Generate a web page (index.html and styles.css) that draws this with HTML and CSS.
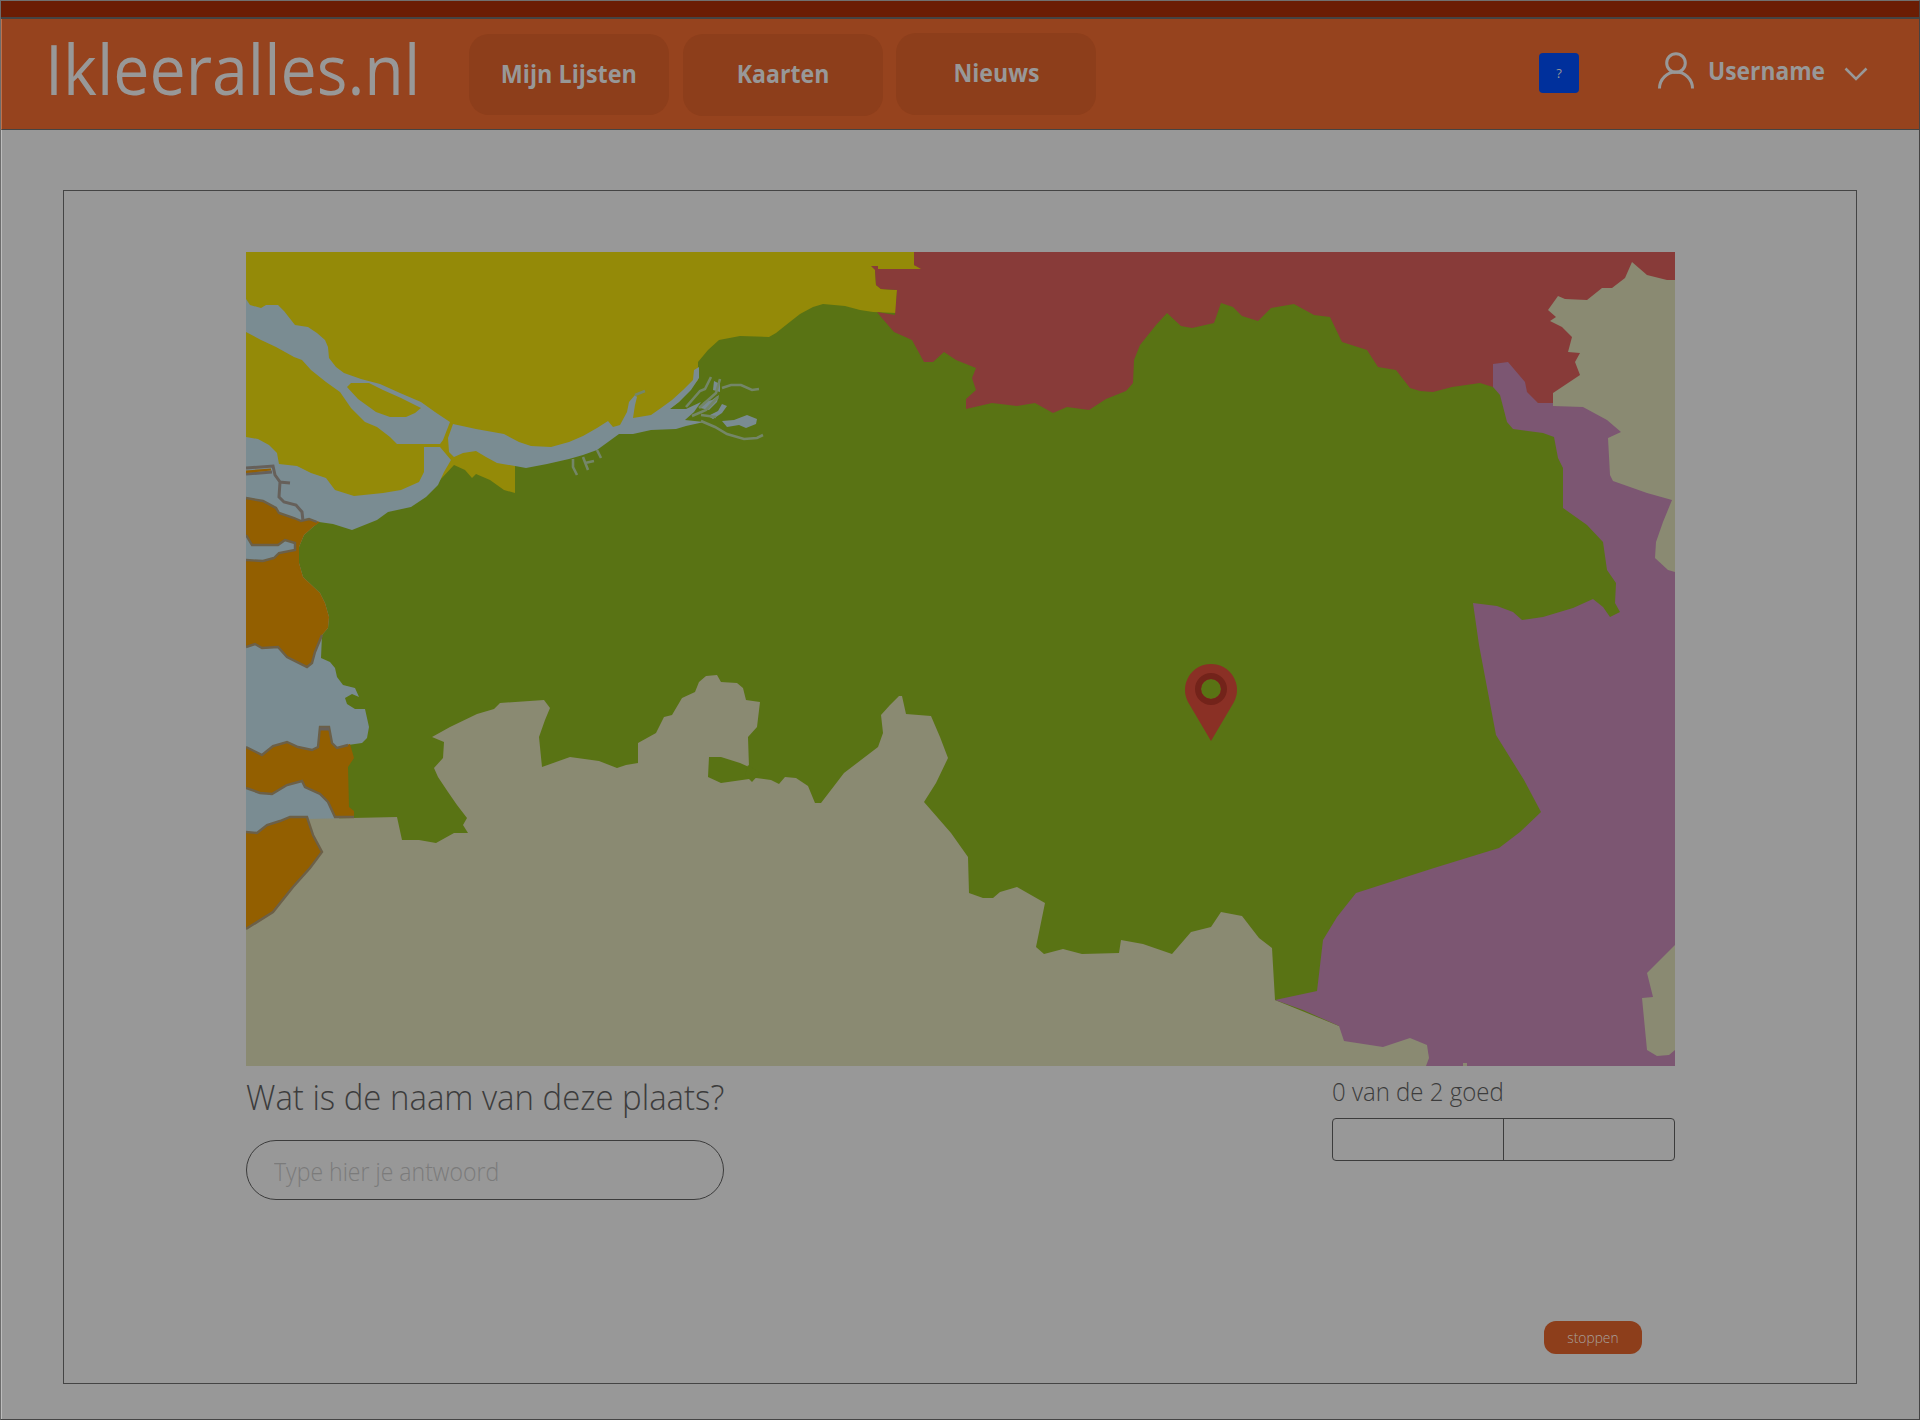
FILE: index.html
```html
<!DOCTYPE html>
<html lang="nl">
<head>
<meta charset="utf-8">
<title>Ikleeralles.nl</title>
<link rel="stylesheet" href="styles.css">
</head>
<body>
<div class="page">
  <div class="topbar"></div>
  <header class="header">
    <div class="logo"><span class="fit fit-logo">Ikleeralles.nl</span></div>
    <nav class="nav">
      <a class="pill"><span class="fit fit-lists">Mijn Lijsten</span></a>
      <a class="pill pill-maps"><span class="fit fit-maps">Kaarten</span></a>
      <a class="pill pill-news"><span class="fit fit-news">Nieuws</span></a>
    </nav>
    <button class="help">?</button>
    <div class="user">
      <svg class="user-icon" width="38" height="38" viewBox="0 0 38 38"><circle cx="19" cy="12" r="9.3"/><path d="M2.5 37.5a16.5 16.5 0 0 1 33 0"/></svg>
      <span class="username"><span class="fit fit-user">Username</span></span>
      <svg class="chevron" width="24" height="14" viewBox="0 0 24 14"><path d="M1.5 1.5L12 12L22.5 1.5"/></svg>
    </div>
  </header>
  <main class="card">
    <svg class="map" width="1429" height="814" viewBox="246 252 1429 814">
      <rect class="green" x="246" y="252" width="1429" height="814"/>
      <path class="yellow" d="M246 252H914V265L921 267V269H875L876 285L881 289L897 290L896 313L873 312L860 310L845 306L823 304L813 307L800 314L786 325L776 333L769 337L740 336L719 340L708 350L698 362V380L679 402L661 415L619 432L544 458L515 463V493L504 490L490 480L476 474L472 478L465 470L454 465L440 480L410 500L350 515L246 480Z"/>
      <path class="red" d="M914 252H1675V300L1600 385L1553 403H1538L1493 387L1480 383L1452 387L1433 392L1420 391L1410 388L1396 370L1378 367L1367 350L1342 342L1330 317L1314 315L1294 304L1271 308L1258 321L1242 316L1233 307L1221 303L1214 323L1192 328L1181 326L1167 313L1156 325L1140 345L1134 360L1133 383L1126 391L1106 399L1089 410L1067 407L1053 413L1035 403L1017 406L992 403L966 409V399L976 390L972 378L976 368L956 360L944 352L933 362H924L912 340L894 332L881 317L877 312L895 315L897 290L881 289L876 285L875 270L871 266H878V269H921L914 265Z"/>
      <path class="water" d="M246 299L250 305L261 308L266 305H278L284 311L295 325L308 327L317 333L325 340L328 347L329 358L336 367L344 373L361 379L380 384L400 393L421 402L435 412L450 422L443 440L440 444H397L390 437L377 427L365 422L351 408L340 392L326 382L311 370L302 360L294 357L276 347L261 340L246 332Z"/>
      <path class="yellow" d="M347 387L351 383H369L383 390L401 398L421 408L415 413L406 417H390L376 412L358 399Z"/>
      <path class="water" d="M453 424L476 429L504 434L519 442L531 446L551 447L569 442L583 436L597 428L608 421L613 427L620 425L627 412L629 402L635 395L637 397L635 405L633 418L651 415L661 408L672 400L683 390L693 380L694 370L699 367V378L691 390L679 402L670 409H686L701 402L694 412L685 420L704 422L686 426L676 429L651 430L633 434H619L608 442L597 450L583 455L569 459L547 464L526 468L515 466L497 463L486 457L476 451L463 453L454 457L449 452L448 438Z"/>
      <path class="water" d="M714 381L720 384V392L713 390ZM704 402L712 400L719 395L717 402L709 410L700 408ZM708 416L718 411L722 404L727 406L722 413L713 419ZM722 421L734 420L747 415L757 419L756 424L746 428L739 425L727 427Z"/>
      <path class="creek" d="M686 407L700 391L705 389L711 377M699 408L716 393L720 379M692 416L706 410L718 397M722 388L731 385L741 385L752 390L759 389M701 421L715 427L727 434L744 439L757 438L763 435M701 415L716 417M635 395L645 391M573 459V467L577 475M583 457L588 470M585 463L594 461M597 450L601 458"/>
      <path class="water" d="M246 437L258 439L269 445L277 453L279 464L297 466L311 473L326 478L335 490L354 496L383 493L401 490L419 482L424 472V447H440L451 460L444 472L438 485L426 497L411 507L388 512L377 520L352 530L333 524L319 522L313 527L304 535L299 547V563L303 577L320 593L325 603L329 617L328 628L322 635L321 658L330 662L335 668L337 677L343 685L355 688L359 697L352 694L345 698L347 704L355 709H365L369 727L367 738L362 743L348 745L340 765V817L322 852L246 860Z"/>
      <path class="beige" d="M246 840L307 819L397 817L402 840H419L436 843L454 833H468L463 825L467 818L457 805L448 792L438 777L434 768L443 758L444 742L432 737L450 727L477 714L494 709L500 703L544 700L550 708L545 720L539 737L542 767L570 757L599 761L617 768L626 765L638 763V743L656 733L664 717L672 715L682 698L695 692L699 682L706 676L717 675L721 682L737 683L743 688L746 700L760 702L757 727L748 737L749 767L740 763L721 757H709L708 777L721 783L756 778L771 780L779 784L785 777L796 778L808 786L815 803H821L844 773L878 747L883 733L881 715L890 705L899 696H902L906 714L931 716L940 737L948 758L936 783L924 802L951 833L968 857L969 893L983 898H993L1000 892L1017 887L1045 903L1036 947L1044 954L1063 949L1082 954L1119 953L1121 940L1143 944L1172 954L1191 932L1211 927L1221 912L1242 916L1259 938L1272 948L1275 1000L1339 1026L1427 1030L1430 1066H246Z"/>
      <path class="green" d="M748 765L760 773L752 782L745 775Z"/>
      <path class="purple" d="M1275 1000L1317 991L1323 940L1337 917L1356 893L1434 868L1499 848L1520 832L1541 812L1524 780L1496 735L1479 645L1473 603L1497 606L1513 612L1522 620L1543 617L1573 608L1593 599L1603 607L1610 617L1620 612L1615 603L1616 583L1607 570L1603 542L1587 525L1563 508V468L1558 458L1554 437L1543 433L1513 429L1507 422L1500 395L1493 387V364L1508 362L1525 382L1527 392L1538 403H1675V1066H1426L1429 1058L1427 1045L1410 1038L1383 1047L1344 1041L1339 1026L1303 1010Z"/>
      <path class="beige" d="M1553 406V393L1580 375L1575 362L1580 353L1568 352L1572 337L1562 327L1550 321L1556 317L1548 310L1558 296L1565 299L1587 300L1602 288H1612L1625 278L1632 262L1647 275L1667 280H1675V572L1668 570L1655 558L1656 542L1663 522L1672 500L1647 493L1613 481L1610 475L1608 438L1621 432L1607 420L1583 407ZM1675 945L1647 973L1653 997L1642 998L1647 1050L1657 1056L1669 1055L1675 1050ZM1463 1063H1467V1066H1463Z"/>
      <path class="orange" d="M246 498L263 501L276 508L279 513L294 518L301 521L309 519L320 522L313 527L304 535L299 547V563L303 577L320 593L325 603L329 617L328 628L322 635L315 652L312 663L307 667L287 657L278 647L262 648L255 644L246 647Z"/>
      <path class="water" d="M246 535L252 545H278L285 540L295 543V550L279 553L274 558L263 561L246 560Z"/>
      <path class="orange" d="M246 747L262 755L273 746L287 742L298 747L312 750L318 747L320 727H329L332 743L337 748L350 744L354 758L348 767L349 807L354 811V817H335L328 802L320 794L305 787L302 781L287 785L272 794L260 793L246 788ZM246 832L257 833L267 825L280 821L290 817H307L313 835L322 852L310 868L293 887L273 912L246 929Z"/>
      <path class="coast" d="M246 498L263 501L276 508L279 513L294 518L301 521L309 519L317 522M246 535L252 545H278L285 540L295 543V550L279 553L274 558L263 561L246 560M246 647L255 644L262 648L278 647L287 657L307 667L312 663L315 652L322 635M246 747L262 755L273 746L287 742L298 747L312 750L318 747L320 727H329L332 743L337 748L348 745M246 788L260 793L272 794L287 785L302 781L305 787L320 794L328 802L335 817H354M246 832L257 833L267 825L280 821L290 817H307L313 835L322 852L310 868L293 887L273 912L246 929"/>
      <path class="dike" d="M246 468L273 466L275 475L280 482L279 497L284 502L296 505L302 512L303 521M279 482L290 483M246 474L272 472M320 729H329"/>
      <path class="orange" d="M246 470.500L271 468.500V470.500L246 473Z"/>
      <path class="pin" fill-rule="evenodd" d="M1211 741L1188 702A26 26 0 1 1 1234 702ZM1211 679a10 10 0 1 0 0 20a10 10 0 1 0 0-20Z"/>
      <circle class="pin-ring" cx="1211" cy="689" r="13"/>
    </svg>
    <section class="quiz">
      <div class="question">
        <h1><span class="fit fit-question">Wat is de naam van deze plaats?</span></h1>
        <div class="answer"><span class="fit fit-answer">Type hier je antwoord</span></div>
      </div>
      <div class="score">
        <p><span class="fit fit-score">0 van de 2 goed</span></p>
        <div class="steps"><i></i><i></i></div>
      </div>
    </section>
    <button class="stop"><span class="fit fit-stop">stoppen</span></button>
  </main>
</div>
</body>
</html>
```
FILE: styles.css
```css
* { box-sizing: border-box; }

body {
  margin: 0;
  font-family: "Open Sans", "Noto Sans", sans-serif;
  background: #989898;
  color: #3c3c3c;
}

.page {
  height: 1420px;
  border: 1px solid #444;
  border-top-color: #707070;
  border-left-color: #6c6c6c;
  box-shadow: inset 1px 0 #bcbcbc;
}

.topbar {
  height: 18px;
  background: #6b1d04;
  border-bottom: 2px solid #444;
}

.header {
  height: 111px;
  display: flex;
  align-items: flex-start;
  background: #96431e;
  border-bottom: 1px solid #444;
  border-left: 1px solid #c07048;
  color: #989898;
}

/* Condensed lettering */
.fit {
  display: inline-block;
  white-space: nowrap;
  transform-origin: 0 50%;
}

.fit-logo { transform: scaleX(0.935); }
.fit-lists { transform: scaleX(0.935); }
.fit-maps { transform: scaleX(0.925); }
.fit-news { transform: scaleX(0.925); }
.fit-user { transform: scaleX(0.912); }
.fit-question { transform: scaleX(0.941); }
.fit-answer { transform: scaleX(0.922); }
.fit-score { transform: scaleX(0.96); }
.fit-stop { transform: scaleX(0.95); }

.logo {
  width: 424px;
  margin-left: 43px;
  font-size: 69px;
  line-height: 94px;
  padding-top: 2px;
}

.nav { display: flex; padding-top: 15px; }

.pill {
  width: 200px;
  height: 81px;
  border-radius: 20px;
  background: #8d3e1b;
  text-align: center;
  font-size: 25px;
  font-weight: 700;
  line-height: 78px;
}

.pill .fit { transform-origin: 50% 50%; }
.pill-maps { height: 82px; margin-left: 14px; }
.pill-news { height: 82px; margin: -1px 0 0 13px; }

.help {
  width: 40px;
  height: 40px;
  margin: 34px 0 0 443px;
  padding: 0;
  border: 0;
  border-radius: 4px;
  background: #00309c;
  color: #989898;
  font: 400 13px/40px "Open Sans", sans-serif;
}

.user {
  display: flex;
  align-items: flex-start;
  padding-left: 78px;
}

.user svg, .map { display: block; }
.user svg { fill: none; stroke: #989898; }
.user-icon { margin-top: 32px; stroke-width: 3; }
.chevron { margin-top: 48px; stroke-width: 2.6; }

.username {
  width: 136px;
  margin-left: 13px;
  padding-top: 32px;
  font-size: 25px;
  font-weight: 700;
  line-height: 38px;
}

.card {
  width: 1794px;
  height: 1194px;
  margin: 60px 0 0 62px;
  padding: 61px 181px 0 182px;
  border: 1px solid #444;
}

.map .green { fill: #597314; }
.map .yellow { fill: #948a08; }
.map .red { fill: #883b39; }
.map .water { fill: #7a8c92; }
.map .beige { fill: #8a8a72; }
.map .purple { fill: #7c5672; }
.map .orange { fill: #935f00; }
.creek { fill: none; stroke: #748668; stroke-width: 2.6; }
.coast { fill: none; stroke: #6c6048; stroke-width: 2.4; }
.dike { fill: none; stroke: #66605a; stroke-width: 3; }
.pin { fill: #8a3025; }
.pin-ring { fill: none; stroke: #73231a; stroke-width: 6; }

.quiz { display: flex; justify-content: space-between; }
.question { width: 478px; }

h1 {
  margin: 0;
  padding-top: 7px;
  font-size: 35px;
  font-weight: 300;
  line-height: 48px;
}

.answer {
  height: 60px;
  margin-top: 19px;
  padding-left: 27px;
  border: 1px solid #3c3c3c;
  border-radius: 30px;
  font-size: 25px;
  font-weight: 300;
  line-height: 60px;
  color: #7b7b7b;
}

.score { width: 343px; }

.score p {
  margin: 0;
  padding-top: 7px;
  font-size: 25px;
  font-weight: 300;
  line-height: 36px;
}

.steps {
  display: flex;
  height: 43px;
  margin-top: 9px;
  border: 1px solid #3c3c3c;
  border-radius: 4px;
}

.steps i { flex: 1; }
.steps i + i { border-left: 1px solid #3c3c3c; }

.stop {
  display: block;
  width: 98px;
  height: 33px;
  margin: 121px 0 0 1298px;
  padding: 0;
  border: 0;
  border-radius: 12px;
  background: #8d3e1b;
  color: #a8a09c;
  font: 300 14.5px/31px "Open Sans", sans-serif;
}

.stop .fit { transform-origin: 50% 50%; }
```
